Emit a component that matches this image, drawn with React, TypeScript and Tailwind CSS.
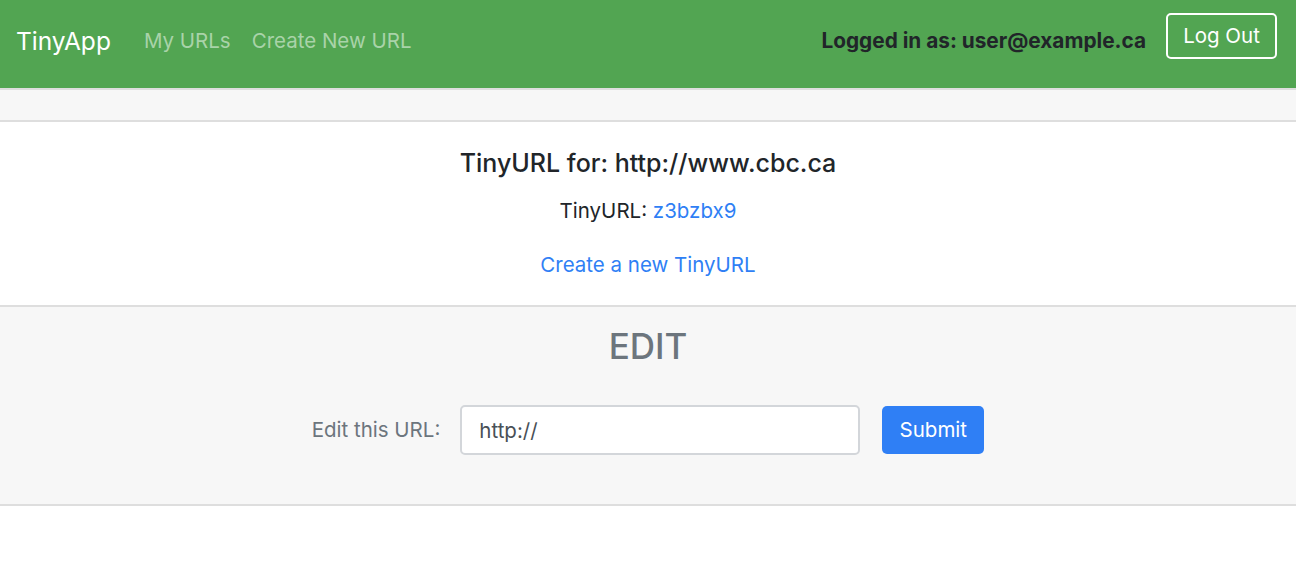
export default function App() {
  return (
    <div className="min-h-[586px] bg-white text-[#212529]" style={{ fontFamily: "Inter, 'Liberation Sans', sans-serif" }}>
      {/* Navbar */}
      <nav className="h-[88px] bg-[#52a552] pl-4 pr-[19px] flex items-start">
        <div className="flex items-center h-[72px] pt-[10px]">
          <span className="text-[24.5px] text-white mr-[33px]">TinyApp</span>
          <a className="text-[20.5px] text-[#a9d3a9] mr-[21px]">My URLs</a>
          <a className="text-[20.5px] text-[#a9d3a9]">Create New URL</a>
        </div>
        <div className="ml-auto flex items-start">
          <span className="text-[20.8px] font-bold text-[#212529] mt-[28px] mr-[20px] leading-[26px]">Logged in as: user@example.ca</span>
          <button className="mt-[13px] h-[46px] w-[111px] border-2 border-white rounded-[5px] text-white text-[20.5px]">Log Out</button>
        </div>
      </nav>

      {/* Card */}
      <div className="border-t-2 border-[#dedede]">
        <div className="h-[32px] bg-[#f7f7f7] border-b-2 border-[#dedede]"></div>
        <div className="h-[185px] bg-white border-b-2 border-[#dedede] flex flex-col items-center pt-[27px]">
          <h5 className="text-[25px] font-medium leading-[28px]">TinyURL for: http://www.cbc.ca</h5>
          <p className="text-[20.5px] mt-[22px] leading-[24px]">
            TinyURL: <a className="text-[#2f7ff5]">z3bzbx9</a>
          </p>
          <a className="text-[20.5px] text-[#2f7ff5] mt-[30px] leading-[24px]">Create a new TinyURL</a>
        </div>
        <div className="h-[199px] bg-[#f7f7f7] border-b-2 border-[#dedede] flex flex-col items-center">
          <h2 className="text-[35px] font-medium text-[#6c757d] mt-[18px] leading-[42px]">EDIT</h2>
          <form className="flex items-center mt-[38px]" onSubmit={(e) => e.preventDefault()}>
            <label className="text-[20.5px] text-[#6c757d] mr-[20px]">Edit this URL:</label>
            <input
              defaultValue="http://"
              className="w-[400px] h-[50px] bg-white border-2 border-[#d3d6da] rounded-[5px] px-[17px] text-[20.5px] text-[#495057] outline-none"
            />
            <button type="submit" className="ml-[22px] h-[48px] w-[102px] bg-[#2f7ff5] text-white rounded-[5px] text-[20.5px]">Submit</button>
          </form>
        </div>
      </div>
    </div>
  );
}
